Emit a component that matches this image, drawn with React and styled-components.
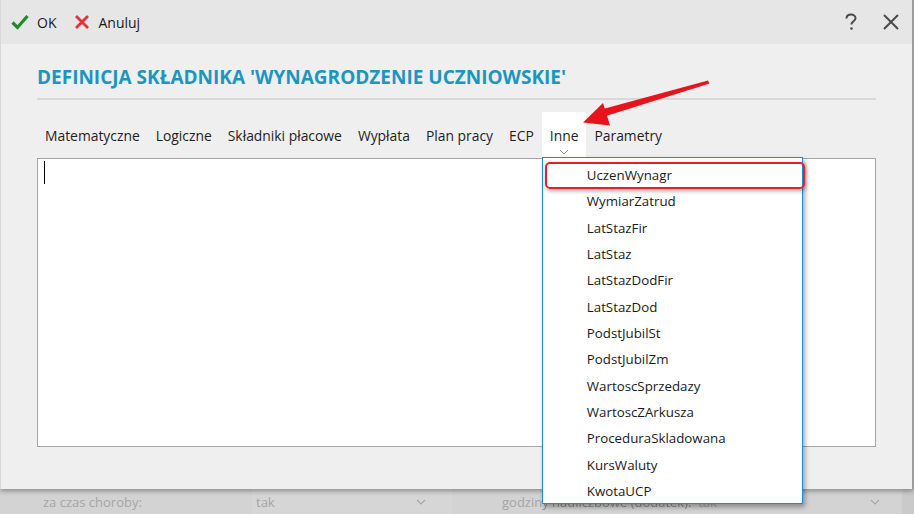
import React from "react";
import styled, { createGlobalStyle } from "styled-components";

const Global = createGlobalStyle`
  html, body { margin: 0; padding: 0; background: #d2d2d2; }
  body { font-family: "Open Sans", "Noto Sans", sans-serif; color: #1e1e1e; }
  * { box-sizing: border-box; }
`;

const Page = styled.div`
  width: 914px;
  height: 514px;
  position: relative;
  overflow: hidden;
  display: flex;
  flex-direction: column;
  background: #d3d3d3;
`;

const Dialog = styled.div`
  height: 489px;
  flex: none;
  display: flex;
  flex-direction: column;
  background: #efefef;
  border-left: 1px solid #d9d9d9;
  border-right: 2px solid #9d9d9d;
  box-shadow: 0 2px 5px rgba(0, 0, 0, 0.35);
  position: relative;
  z-index: 1;
`;

const Toolbar = styled.div`
  height: 44px;
  flex: none;
  display: flex;
  align-items: center;
  padding: 0 10px;
  background: #e6e6e6;
`;

const ToolButton = styled.div`
  display: flex;
  align-items: center;
  gap: 8px;
  font-size: 14px;
  margin-right: 18px;
  color: #1a1a1a;
`;

const Spacer = styled.div`
  flex: 1;
`;

const IconBtn = styled.div`
  width: 20px;
  display: flex;
  justify-content: center;
  margin-left: ${(p) => p.$ml || 0}px;
  margin-right: ${(p) => p.$mr || 0}px;
`;

const Body = styled.div`
  flex: 1;
  display: flex;
  flex-direction: column;
  padding: 21px 36px 0 35px;
`;

const Title = styled.h1`
  margin: 0 0 0 1px;
  font-size: 19px;
  line-height: 25px;
  font-weight: 700;
  color: #1b96c1;
  letter-spacing: 0;
`;

const Separator = styled.div`
  height: 2px;
  background: #d9d9d9;
  margin: 8px 0 0 1px;
`;

const Tabs = styled.div`
  display: flex;
  margin-top: 12px;
  height: 46px;
  padding-left: 1px;
`;

const Tab = styled.div`
  position: relative;
  padding: 0 8px;
  display: flex;
  align-items: center;
  font-size: 13.87px;
  color: #1e1e1e;
  background: ${(p) => (p.$active ? "#ffffff" : "transparent")};
`;

const TabChevron = styled.svg`
  position: absolute;
  left: 50%;
  bottom: 3px;
  margin-left: -5px;
`;

const Editor = styled.div`
  height: 289px;
  margin-left: 1px;
  background: #fff;
  border: 1px solid #a6a6a6;
  position: relative;
`;

const Caret = styled.div`
  position: absolute;
  left: 6px;
  top: 2px;
  width: 1px;
  height: 23px;
  background: #000;
`;

const Dropdown = styled.div`
  position: absolute;
  left: 0;
  top: 45px;
  width: 261px;
  height: 347px;
  background: #fff;
  border: 1px solid #1f8ad6;
  box-shadow: 2px 3px 5px rgba(0, 0, 0, 0.35);
  padding-top: 4px;
  z-index: 5;
`;

const Item = styled.div`
  position: relative;
  height: 26.33px;
  display: flex;
  align-items: center;
  padding-left: 44px;
  font-size: 13.3px;
  color: #1a1a1a;
  white-space: nowrap;
`;

const Highlight = styled.div`
  position: absolute;
  left: 2px;
  right: -3px;
  top: 0;
  bottom: -1px;
  border: 2px solid #e5202a;
  border-radius: 5px;
  box-shadow: 1px 2px 4px rgba(0, 0, 0, 0.35);
`;

const Arrow = styled.svg`
  position: absolute;
  left: 0;
  top: 0;
  pointer-events: none;
  z-index: 10;
`;

const Footer = styled.div`
  flex: 1;
  display: grid;
  grid-template-columns: 252px 200px 450px 12px;
  align-items: center;
  font-size: 13px;
  color: #a6a6a6;
`;

const FooterCell = styled.div`
  height: 100%;
  display: flex;
  align-items: center;
  justify-content: space-between;
  padding-left: ${(p) => p.$pl || 0}px;
  padding-right: ${(p) => p.$pr || 0}px;
  background: ${(p) => p.$bg || "transparent"};
`;

const Smudge = styled.span`
  color: #8f8f8f;
  filter: blur(0.6px);
`;

const Chev = ({ color = "#a8a8a8" }) => (
  <svg width="10" height="6" viewBox="0 0 10 6">
    <path d="M1 1 L5 5 L9 1" fill="none" stroke={color} strokeWidth="1.2" />
  </svg>
);

const items = [
  "UczenWynagr",
  "WymiarZatrud",
  "LatStazFir",
  "LatStaz",
  "LatStazDodFir",
  "LatStazDod",
  "PodstJubilSt",
  "PodstJubilZm",
  "WartoscSprzedazy",
  "WartoscZArkusza",
  "ProceduraSkladowana",
  "KursWaluty",
  "KwotaUCP",
];

const tabs = [
  "Matematyczne",
  "Logiczne",
  "Składniki płacowe",
  "Wypłata",
  "Plan pracy",
  "ECP",
  "Inne",
  "Parametry",
];

export default function App() {
  return (
    <>
      <Global />
      <Page>
        <Dialog>
          <Toolbar>
            <ToolButton>
              <svg width="18" height="16" viewBox="0 0 18 16">
                <path d="M1.5 8.5 L6.5 13.5 L16.5 2" fill="none" stroke="#1f8a2e" strokeWidth="3.2" />
              </svg>
              OK
            </ToolButton>
            <ToolButton>
              <svg width="16" height="16" viewBox="0 0 16 16">
                <path d="M2 2 L14 14 M14 2 L2 14" fill="none" stroke="#e5303a" strokeWidth="2.8" />
              </svg>
              Anuluj
            </ToolButton>
            <Spacer />
            <IconBtn>
              <svg width="14" height="18" viewBox="0 0 14 18">
                <path d="M2.5 5.5 C2.5 2.5 4.5 1.5 7 1.5 C9.5 1.5 11.5 3 11.5 5.2 C11.5 8 7.5 8.5 7.5 11.5" fill="none" stroke="#4a4a4a" strokeWidth="2" />
                <circle cx="7.5" cy="15.5" r="1.3" fill="#4a4a4a" />
              </svg>
            </IconBtn>
            <IconBtn $ml={20} $mr={1}>
              <svg width="18" height="18" viewBox="0 0 18 18">
                <path d="M2 2 L16 16 M16 2 L2 16" fill="none" stroke="#4a4a4a" strokeWidth="2" />
              </svg>
            </IconBtn>
          </Toolbar>
          <Body>
            <Title>DEFINICJA SKŁADNIKA 'WYNAGRODZENIE UCZNIOWSKIE'</Title>
            <Separator />
            <Tabs>
              {tabs.map((t) => (
                <Tab key={t} $active={t === "Inne"}>
                  {t}
                  {t === "Inne" && (
                    <>
                      <TabChevron width="10" height="6" viewBox="0 0 10 6">
                        <path d="M1 1 L5 5 L9 1" fill="none" stroke="#8a8a8a" strokeWidth="1" />
                      </TabChevron>
                      <Dropdown>
                        {items.map((it, i) => (
                          <Item key={it}>
                            {i === 0 && <Highlight />}
                            {it}
                          </Item>
                        ))}
                      </Dropdown>
                    </>
                  )}
                </Tab>
              ))}
            </Tabs>
            <Editor>
              <Caret />
            </Editor>
          </Body>
        </Dialog>
        <Footer>
          <FooterCell $pl={43}>za czas choroby:</FooterCell>
          <FooterCell $pl={4} $pr={26} $bg="#d6d6d6">
            tak <Chev />
          </FooterCell>
          <FooterCell $pl={50} $pr={22}>
            <span>
              godzin<Smudge>y nadliczbowe (dodatek):</Smudge>&nbsp;&nbsp;tak
            </span>
            <Chev />
          </FooterCell>
          <FooterCell $bg="#cacaca" />
        </Footer>
        <Arrow width="914" height="514" viewBox="0 0 914 514">
          <path d="M708 80.5 L709.5 83.5 L606 116 L603 109 Z" fill="#e8141c" />
          <path d="M583 122.5 L603 103 L610 125.5 Z" fill="#e8141c" />
        </Arrow>
      </Page>
    </>
  );
}
